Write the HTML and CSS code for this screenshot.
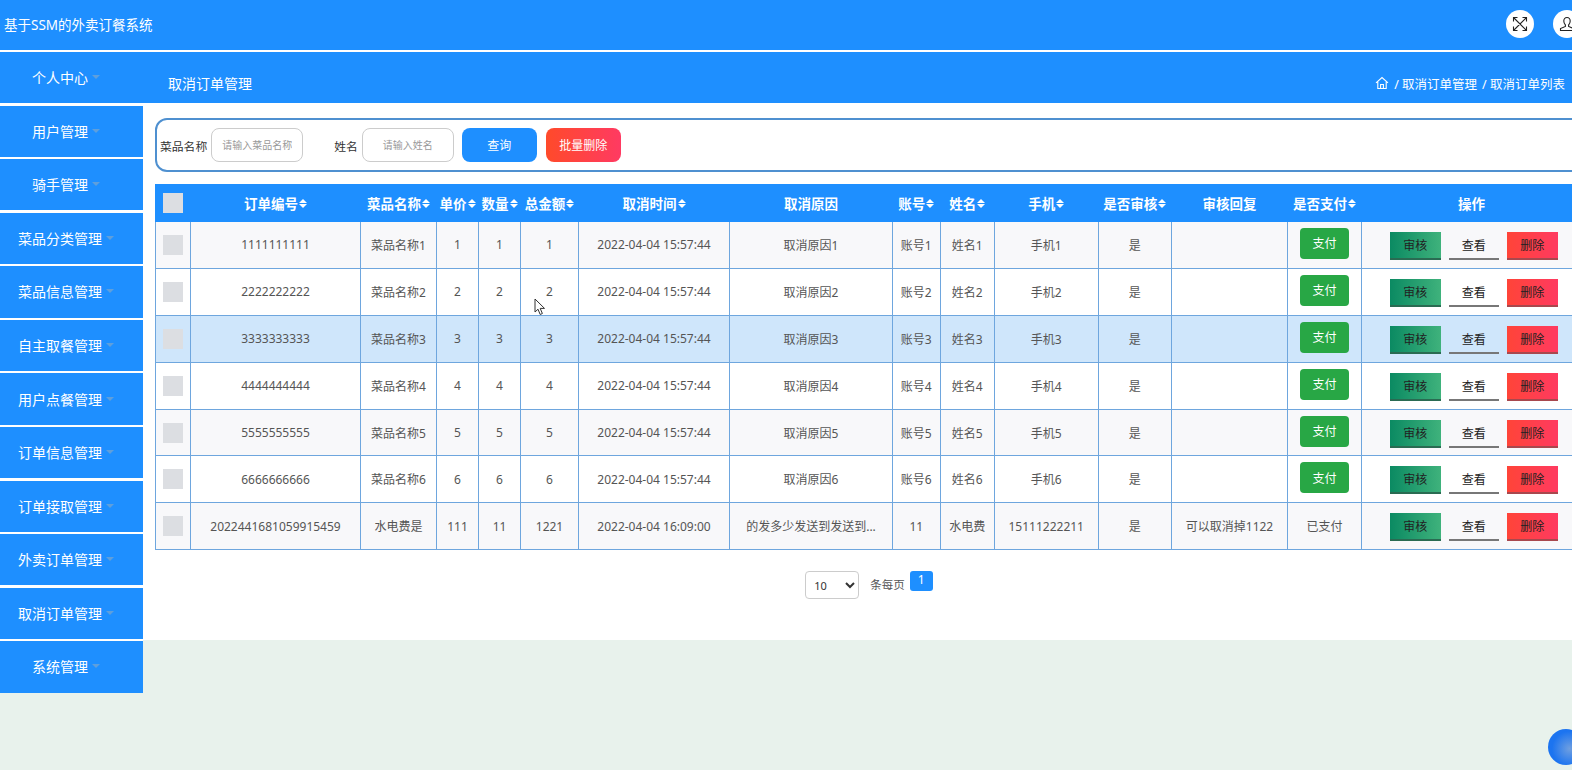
FILE: index.html
```html
<!DOCTYPE html>
<html lang="zh-CN">
<head>
  <meta charset="UTF-8">
  <meta name="viewport" content="width=device-width, initial-scale=1.0">
  <title>基于SSM的外卖订餐系统</title>
  <link rel="stylesheet" href="styles.css">
</head>
<body>

  <header class="topbar">
    <div class="site-title">基于SSM的外卖订餐系统</div>
    <div class="top-icons">
      <span class="round-icon">
        <svg width="16" height="16" viewBox="0 0 16 16" fill="none" stroke="#222" stroke-width="1.1">
          <path d="M1.5 1.5L14.5 14.5M14.5 1.5L1.5 14.5M1.5 5.5V1.5H5.5M10.5 1.5H14.5V5.5M14.5 10.5V14.5H10.5M5.5 14.5H1.5V10.5"/>
        </svg>
      </span>
      <span class="round-icon">
        <svg width="16" height="16" viewBox="0 0 16 16" fill="none" stroke="#222" stroke-width="1.1">
          <path d="M8 1.5C5.9 1.5 4.8 3 4.8 5C4.8 7 5.6 8.2 6.4 9V10.4L1.5 12.6V14.5H14.5V12.6L9.6 10.4V9C10.4 8.2 11.2 7 11.2 5C11.2 3 10.1 1.5 8 1.5Z"/>
        </svg>
      </span>
    </div>
  </header>

  <div class="layout">
    <nav class="sidebar">
      <a class="side-item">个人中心</a>
      <a class="side-item">用户管理</a>
      <a class="side-item">骑手管理</a>
      <a class="side-item">菜品分类管理</a>
      <a class="side-item">菜品信息管理</a>
      <a class="side-item">自主取餐管理</a>
      <a class="side-item">用户点餐管理</a>
      <a class="side-item">订单信息管理</a>
      <a class="side-item">订单接取管理</a>
      <a class="side-item">外卖订单管理</a>
      <a class="side-item">取消订单管理</a>
      <a class="side-item">系统管理</a>
    </nav>

    <main class="main">
      <div class="page-head">
        <span class="page-title">取消订单管理</span>
        <div class="crumbs">
          <svg width="14" height="14" viewBox="0 0 14 14" fill="none" stroke="#fff" stroke-width="1.1">
            <path d="M1 6.8L7 1.5L13 6.8M2.8 5.6V12.5H11.2V5.6M5.6 12.5V8.5H8.4V12.5"/>
          </svg>
          <span>/ 取消订单管理</span>
          <span>/ 取消订单列表</span>
        </div>
      </div>

      <div class="content">
        <form class="search-panel">
          <label class="search-label">菜品名称</label>
          <input class="search-input" type="text" placeholder="请输入菜品名称">
          <label class="search-label label-gap">姓名</label>
          <input class="search-input input-center" type="text" placeholder="请输入姓名">
          <button class="btn btn-query" type="button">查询</button>
          <button class="btn btn-remove" type="button">批量删除</button>
        </form>

        <table class="order-table">
          <colgroup>
            <col class="c-check"><col class="c-no"><col class="c-name"><col class="c-small"><col class="c-small">
            <col class="c-total"><col class="c-time"><col class="c-reason"><col class="c-acc"><col class="c-user">
            <col class="c-phone"><col class="c-audit"><col class="c-reply"><col class="c-pay"><col class="c-ops">
          </colgroup>
          <thead>
            <tr>
              <th><span class="check"></span></th>
              <th><span class="sort">订单编号</span></th>
              <th><span class="sort">菜品名称</span></th>
              <th><span class="sort">单价</span></th>
              <th><span class="sort">数量</span></th>
              <th><span class="sort">总金额</span></th>
              <th><span class="sort">取消时间</span></th>
              <th>取消原因</th>
              <th><span class="sort">账号</span></th>
              <th><span class="sort">姓名</span></th>
              <th><span class="sort">手机</span></th>
              <th><span class="sort">是否审核</span></th>
              <th>审核回复</th>
              <th><span class="sort">是否支付</span></th>
              <th>操作</th>
            </tr>
          </thead>
          <tbody>
            <tr>
              <td><span class="check"></span></td>
              <td>1111111111</td><td>菜品名称1</td><td>1</td><td>1</td><td>1</td>
              <td>2022-04-04 15:57:44</td><td>取消原因1</td><td>账号1</td><td>姓名1</td><td>手机1</td><td>是</td><td></td>
              <td><button class="pay" type="button">支付</button></td>
              <td><div class="ops"><button class="op op-audit" type="button">审核</button><button class="op op-view" type="button">查看</button><button class="op op-del" type="button">删除</button></div></td>
            </tr>
            <tr>
              <td><span class="check"></span></td>
              <td>2222222222</td><td>菜品名称2</td><td>2</td><td>2</td><td>2</td>
              <td>2022-04-04 15:57:44</td><td>取消原因2</td><td>账号2</td><td>姓名2</td><td>手机2</td><td>是</td><td></td>
              <td><button class="pay" type="button">支付</button></td>
              <td><div class="ops"><button class="op op-audit" type="button">审核</button><button class="op op-view" type="button">查看</button><button class="op op-del" type="button">删除</button></div></td>
            </tr>
            <tr class="row-hover">
              <td><span class="check"></span></td>
              <td>3333333333</td><td>菜品名称3</td><td>3</td><td>3</td><td>3</td>
              <td>2022-04-04 15:57:44</td><td>取消原因3</td><td>账号3</td><td>姓名3</td><td>手机3</td><td>是</td><td></td>
              <td><button class="pay" type="button">支付</button></td>
              <td><div class="ops"><button class="op op-audit" type="button">审核</button><button class="op op-view" type="button">查看</button><button class="op op-del" type="button">删除</button></div></td>
            </tr>
            <tr>
              <td><span class="check"></span></td>
              <td>4444444444</td><td>菜品名称4</td><td>4</td><td>4</td><td>4</td>
              <td>2022-04-04 15:57:44</td><td>取消原因4</td><td>账号4</td><td>姓名4</td><td>手机4</td><td>是</td><td></td>
              <td><button class="pay" type="button">支付</button></td>
              <td><div class="ops"><button class="op op-audit" type="button">审核</button><button class="op op-view" type="button">查看</button><button class="op op-del" type="button">删除</button></div></td>
            </tr>
            <tr>
              <td><span class="check"></span></td>
              <td>5555555555</td><td>菜品名称5</td><td>5</td><td>5</td><td>5</td>
              <td>2022-04-04 15:57:44</td><td>取消原因5</td><td>账号5</td><td>姓名5</td><td>手机5</td><td>是</td><td></td>
              <td><button class="pay" type="button">支付</button></td>
              <td><div class="ops"><button class="op op-audit" type="button">审核</button><button class="op op-view" type="button">查看</button><button class="op op-del" type="button">删除</button></div></td>
            </tr>
            <tr>
              <td><span class="check"></span></td>
              <td>6666666666</td><td>菜品名称6</td><td>6</td><td>6</td><td>6</td>
              <td>2022-04-04 15:57:44</td><td>取消原因6</td><td>账号6</td><td>姓名6</td><td>手机6</td><td>是</td><td></td>
              <td><button class="pay" type="button">支付</button></td>
              <td><div class="ops"><button class="op op-audit" type="button">审核</button><button class="op op-view" type="button">查看</button><button class="op op-del" type="button">删除</button></div></td>
            </tr>
            <tr>
              <td><span class="check"></span></td>
              <td>2022441681059915459</td><td>水电费是</td><td>111</td><td>11</td><td>1221</td>
              <td>2022-04-04 16:09:00</td><td>的发多少发送到发送到...</td><td>11</td><td>水电费</td><td>15111222211</td><td>是</td><td>可以取消掉1122</td>
              <td>已支付</td>
              <td><div class="ops"><button class="op op-audit" type="button">审核</button><button class="op op-view" type="button">查看</button><button class="op op-del" type="button">删除</button></div></td>
            </tr>
          </tbody>
        </table>

        <div class="pager">
          <select class="page-size">
            <option>10</option>
            <option>20</option>
          </select>
          <span class="page-text">条每页</span>
          <span class="page-num">1</span>
        </div>
      </div>
    </main>
  </div>

  <!-- 鼠标指针 -->
  <svg class="cursor" width="12" height="18" viewBox="0 0 12 18" fill="#fff" stroke="#333" stroke-width="1">
    <path d="M1 1V14L4 11.2L6.2 16.5L8.4 15.5L6.2 10.4H10.5Z"/>
  </svg>
  <span class="float-ball"></span>

</body>
</html>
```

FILE: styles.css
```css
* {
  box-sizing: border-box;
}

html, body {
  height: 100%;
}

body {
  margin: 0;
  overflow: hidden;
  position: relative;
  background: #e8f2ec;
  color: #555;
  font-family: "Noto Sans", "Noto Sans CJK SC", sans-serif;
  font-size: 12px;
}

.topbar {
  height: 52px;
  display: flex;
  justify-content: space-between;
  align-items: center;
  padding: 0 0 2px 4px;
  background: #1e8fff;
  border-bottom: 2px solid #fff;
  color: #fff;
}

.site-title {
  font-size: 13.5px;
}

.top-icons {
  display: flex;
  gap: 19px;
  margin-right: -9px;
}

.round-icon {
  width: 28px;
  height: 28px;
  border-radius: 50%;
  background: #fff;
  display: flex;
  justify-content: center;
  align-items: center;
}

.layout {
  display: flex;
  align-items: flex-start;
}

/* 左侧菜单 */
.sidebar {
  width: 143px;
  flex-shrink: 0;
  display: flex;
  flex-direction: column;
  gap: 2.4px;
  background: #fff;
}

.side-item {
  height: 51.2px;
  display: flex;
  justify-content: center;
  align-items: center;
  padding: 0 11px 1px 0;
  background: #1e8fff;
  color: #fff;
  font-size: 14px;
}

.side-item::after {
  content: "";
  margin: 0 0 0 4px;
  border: 4px solid transparent;
  border-top-color: #5f9fdc;
  border-bottom-width: 0;
}

.main {
  flex: 1;
  min-width: 0;
}

.page-head {
  height: 51px;
  display: flex;
  justify-content: space-between;
  align-items: center;
  padding: 11px 7px 0 25px;
  background: #1e8fff;
  color: #fff;
}

.page-title {
  font-size: 14px;
}

.crumbs {
  display: flex;
  align-items: center;
  gap: 5px;
  font-size: 12.5px;
}

.content {
  height: 537px;
  padding: 15px 0 0 12px;
  background: #fff;
  overflow: hidden;
}

/* 搜索栏 */
.search-panel {
  width: 1440px;
  height: 54px;
  display: flex;
  align-items: center;
  padding-left: 3px;
  border: 2px solid #4f90d0;
  border-radius: 12px;
  background: #fff;
}

.search-label {
  color: #333;
  font-size: 11.8px;
}

.label-gap {
  margin-left: 31px;
}

.search-input {
  width: 92px;
  height: 34px;
  margin-left: 4px;
  padding: 0 10px;
  border: 1px solid #ccc;
  border-radius: 8px;
  font-family: inherit;
  font-size: 10px;
}

.search-input::placeholder {
  color: #999;
}

.input-center {
  text-align: center;
}

.btn {
  width: 75px;
  height: 34px;
  margin-left: 8px;
  border: none;
  border-radius: 8px;
  color: #fff;
  font-family: inherit;
  font-size: 12px;
}

.btn-query {
  background: #1e8fff;
}

.btn-remove {
  margin-left: 9px;
  background: linear-gradient(to right, #ff4a2a, #ff3a62);
}

/* 表格 */
.order-table {
  width: 1426px;
  margin-top: 12px;
  table-layout: fixed;
  border-collapse: collapse;
}

.c-check { width: 35px; }
.c-no { width: 170px; }
.c-name { width: 76px; }
.c-small { width: 42px; }
.c-total { width: 58px; }
.c-time { width: 151px; }
.c-reason { width: 163px; }
.c-acc { width: 47.5px; }
.c-user { width: 54.5px; }
.c-phone { width: 103.5px; }
.c-audit { width: 73.5px; }
.c-reply { width: 116px; }
.c-pay { width: 74px; }
.c-ops { width: 220px; }

.order-table th {
  height: 37px;
  padding: 0;
  background: #1e8fff;
  border: 1px solid #1e8fff;
  color: #fff;
  font-size: 13.5px;
  font-weight: bold;
}

.order-table td {
  height: 46.9px;
  padding: 0;
  border: 1px solid #6ea6de;
  text-align: center;
  white-space: nowrap;
  overflow: hidden;
}

.order-table tbody tr:nth-child(odd) {
  background: #f8f8fa;
}

.order-table tbody tr.row-hover {
  background: #cfe6fb;
}

.check {
  display: block;
  width: 20px;
  height: 20px;
  margin-left: 7px;
  background: #dcdee2;
}

/* 排序箭头 */
.sort {
  position: relative;
  padding-right: 9px;
}

.sort::before,
.sort::after {
  content: "";
  position: absolute;
  right: 0;
  border: 4.5px solid transparent;
}

.sort::before {
  top: 50%;
  margin-top: -5px;
  border-top-width: 0;
  border-bottom: 4.5px solid #fff;
}

.sort::after {
  top: 50%;
  margin-top: 0;
  border-bottom-width: 0;
  border-top: 4.5px solid #fff;
}

.pay {
  display: block;
  width: 49px;
  height: 31px;
  margin: -3px auto 0;
  border: none;
  border-radius: 4px;
  background: #28a745;
  color: #fff;
  font-family: inherit;
  font-size: 12px;
}

.ops {
  display: flex;
  gap: 8px;
  padding: 2px 0 0 28px;
}

.op {
  width: 50.5px;
  height: 28px;
  padding: 0;
  border: none;
  border-bottom: 2px solid #555;
  color: #222;
  font-family: inherit;
  font-size: 12px;
}

.op-audit {
  background: linear-gradient(to right, #0b8a62, #3fb27c);
  border-bottom-color: #2a6b52;
}

.op-view {
  background: transparent;
  border-bottom-color: #777;
}

.op-del {
  background: linear-gradient(to right, #ff4438, #ff3a60);
  border-bottom-color: #a8484e;
}

/* 分页 */
.pager {
  width: 1428px;
  margin-top: 21px;
  display: flex;
  justify-content: center;
  align-items: flex-start;
}

.page-size {
  width: 54px;
  height: 28px;
  padding-left: 4px;
  border: 1px solid #ccc;
  border-radius: 4px;
  background: #fff;
  color: #333;
  font-family: inherit;
  font-size: 11px;
}

.page-text {
  margin: 5px 5px 0 11px;
  font-size: 11.5px;
}

.page-num {
  width: 23px;
  height: 20px;
  border-radius: 3px;
  background: #1e8fff;
  color: #fff;
  text-align: center;
  line-height: 18px;
}

.cursor {
  position: absolute;
  left: 534px;
  top: 298px;
}

.float-ball {
  position: absolute;
  left: 1548px;
  top: 729px;
  width: 36px;
  height: 36px;
  border-radius: 50%;
  background: radial-gradient(circle at 60% 55%, #6f9fe0, #1c74f0 60%);
}
```
